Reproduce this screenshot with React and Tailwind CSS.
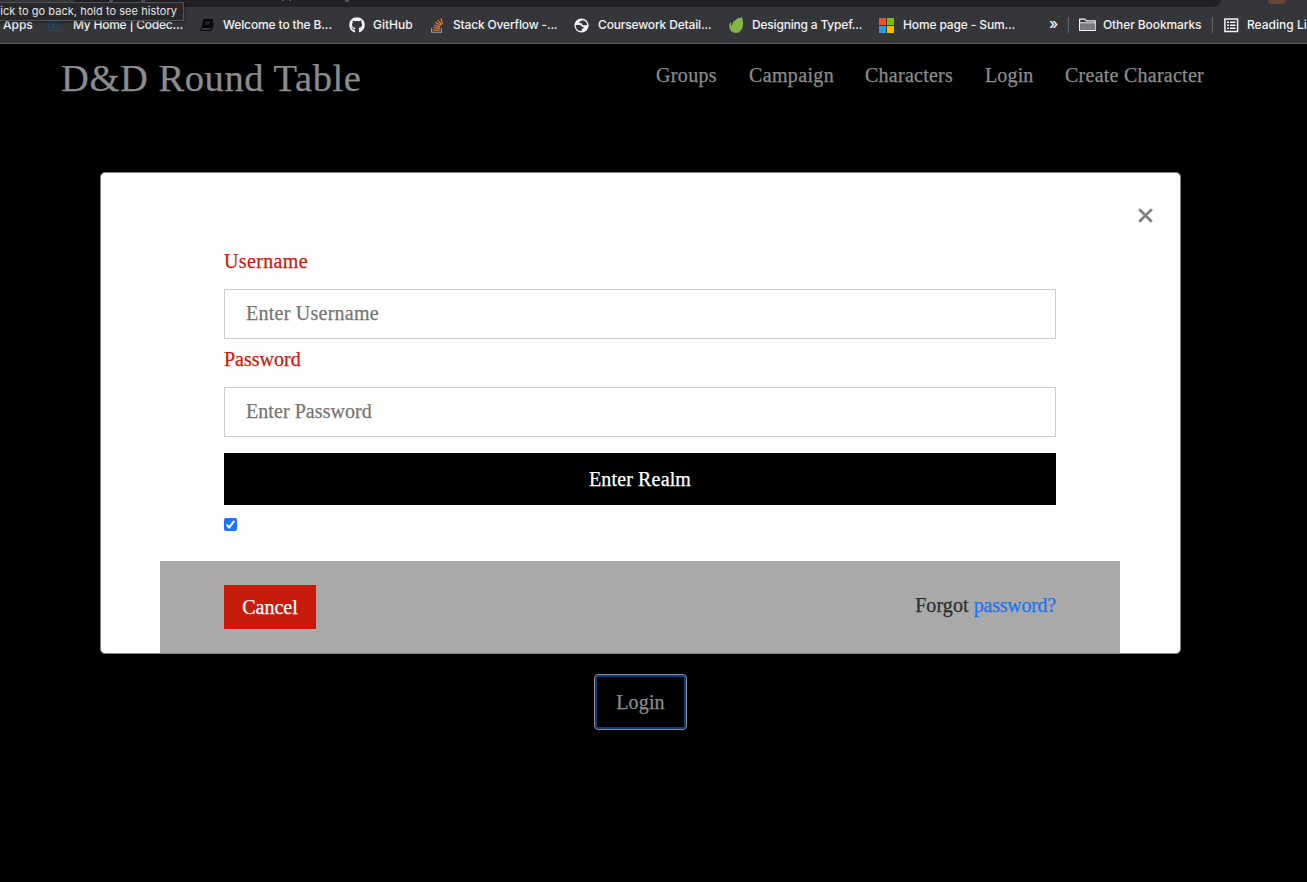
import React from "react";
import { FaGithub } from "react-icons/fa";

const serif = "font-['Liberation_Serif',serif] [-webkit-text-stroke:0.25px_currentColor]";

function BookIcon() {
  return (
    <svg width="14" height="14" viewBox="0 0 14 14">
      <path d="M4 1h8.500c.6 0 .8.3.6.9l-2.400 8.200H1.600L3.200 1.800C3.300 1.300 3.500 1 4 1z" fill="#050505" />
      <path d="M1.600 10c-1.200.8-.8 2.500.4 2.500h8.200c.6 0 1-.4 1.200-1l2-7" fill="none" stroke="#050505" strokeWidth="1.200" />
      <path d="M5.300 4h5M4.700 6h5" stroke="#444548" strokeWidth=".8" />
    </svg>
  );
}

function StackIcon() {
  return (
    <svg width="13" height="15" viewBox="0 0 13 15" fill="none">
      <path d="M.6 10v4.200h9.800V10" stroke="#9a9ca0" strokeWidth="1.100" />
      <path d="M2.300 12.200h6.500M2.400 9.700l6.400.7M3 7.100l6.100 1.700M4.300 4.300l5.400 3.200M6.700 2.100l4 4.700M10 .3l1.400 5.500" stroke="#e87a24" strokeWidth="1.300" />
    </svg>
  );
}

function GlobeIcon() {
  return (
    <svg width="15" height="15" viewBox="0 0 15 15">
      <circle cx="7.500" cy="7.500" r="7.100" fill="#f1f3f4" />
      <path d="M8.300 2.200 5.600 3.700c-.7.5-.3 1.500.5 1.500h1.200c.5 0 .8.4.8.8 0 .8.600 1.200 1.300 1.200h2.800l1-.4c-.2-2.400-1.900-4.200-4.900-4.600z" fill="#35363a" />
      <path d="M1.700 6.900h3.900c1.300 0 2.200.8 2.200 1.900h1.700c.3 1.500-.6 2.200-1.700 2.300v1.700c-1.300.6-3 .1-4.100-.8-1.300-1.200-2.100-3.100-2-5.100z" fill="#35363a" />
    </svg>
  );
}

function LeafIcon() {
  return (
    <svg width="15" height="16" viewBox="0 0 15 16">
      <path d="M11.900.4c1.500-.8 2.300 3.500 2.100 7.300-.2 4.500-2.800 8.100-7 8.100C3.100 15.800.3 13 .3 9.400c0-1.700.4-3.200 1.400-4.300.3-.3.600-.1.500.3-.3 1.300-.1 2.900.5 4.200C3.100 4.500 7.300 1.300 11.900.4z" fill="#82b541" />
    </svg>
  );
}

function WindowsIcon() {
  return (
    <svg width="15" height="15" viewBox="0 0 15 15">
      <path d="M0 0h7v7H0z" fill="#f25022" />
      <path d="M8 0h7v7H8z" fill="#7fba00" />
      <path d="M0 8h7v7H0z" fill="#239eea" />
      <path d="M8 8h7v7H8z" fill="#ffb900" />
    </svg>
  );
}

function FolderIcon() {
  return (
    <svg width="17" height="14" viewBox="0 0 17 14">
      <path d="M.6 12.400V1.100h5.200l1.500 1.800h8.900v9.500z" fill="#35363a" stroke="#f1f3f4" strokeWidth="1.200" />
      <path d="M1.200 5.200h14.500v6.600H1.200z" fill="#7b7c7f" />
      <path d="M.6 4.800h15.600" stroke="#f1f3f4" strokeWidth="1" />
    </svg>
  );
}

function ListIcon() {
  return (
    <svg width="15" height="15" viewBox="0 0 15 15" fill="none" stroke="#f1f3f4">
      <path d="M.9.9h12.700v12.700H.9z" strokeWidth="1.500" />
      <path d="M3 4.300h2M3 7.300h2M3 10.300h2M6 4.300h5.500M6 7.300h5.500M6 10.300h5.500" strokeWidth="1.400" />
    </svg>
  );
}

function CodecademyIcon() {
  return (
    <svg width="18" height="15" viewBox="0 0 18 15" fill="none" stroke="#204b70">
      <path d="M1 3.500h9v9H1z" />
      <path d="M7 6.200H4.500v3.600H7M13 12.800h3" />
    </svg>
  );
}

function Bookmark({ icon, iconBox, label, text }) {
  return (
    <div className="flex shrink-0 items-center">
      <span className={`flex shrink-0 items-center ${iconBox}`}>{icon}</span>
      <span className={`shrink-0 whitespace-nowrap ${text}`}>{label}</span>
    </div>
  );
}

function BrowserBar() {
  return (
    <div className="relative h-[44px] overflow-hidden border-b border-[#5b5c60] bg-[#35363a] font-['Inter',sans-serif] text-[12px] font-medium text-[#f1f3f4]">
      <div className="flex h-[7px] items-start">
        <div className="h-[7px] w-[75px]" />
        <div className="h-[7px] w-[1146px] rounded-br-[8px] bg-[#202124]">
          <svg className="block" width="300" height="3" viewBox="0 0 300 3" fill="none" stroke="#85878a">
            <path d="M34 .5c1 1 3 1 4 0M66 .5c1 1 3 1 4 0M208 0v1M215 0v1M270 .5c1 1 3 1 4 0" />
          </svg>
        </div>
        <div className="ml-[47px] h-[4px] w-[18px] rounded-b-full bg-[#69453c]" />
      </div>
      <div className="flex h-[36px] items-center pl-[3px]">
        <Bookmark iconBox="w-0" label="Apps" text="w-[45px]" />
        <Bookmark iconBox="w-[25px]" icon={<CodecademyIcon />} label="My Home | Codec..." text="w-[127px] tracking-[-0.23px]" />
        <Bookmark iconBox="w-[23px]" icon={<BookIcon />} label="Welcome to the B..." text="w-[126px] tracking-[-0.13px]" />
        <Bookmark iconBox="w-[24px]" icon={<FaGithub size={16} />} label="GitHub" text="w-[58px]" />
        <Bookmark iconBox="w-[22px]" icon={<StackIcon />} label="Stack Overflow -..." text="w-[121px] tracking-[-0.17px]" />
        <Bookmark iconBox="w-[24px]" icon={<GlobeIcon />} label="Coursework Detail..." text="w-[131px] tracking-[-0.16px]" />
        <Bookmark iconBox="w-[23px]" icon={<LeafIcon />} label="Designing a Typef..." text="w-[127px] tracking-[-0.19px]" />
        <Bookmark iconBox="w-[24px]" icon={<WindowsIcon />} label="Home page - Sum..." text="w-[146px] tracking-[-0.13px]" />
        <span className="w-[19px] shrink-0 pb-[2px] text-[15px]">»</span>
        <span className="mr-[10px] h-4 w-px shrink-0 bg-[#65666a]" />
        <Bookmark iconBox="w-[24px]" icon={<FolderIcon />} label="Other Bookmarks" text="w-[109px] tracking-[-0.1px]" />
        <span className="mr-[11px] h-4 w-px shrink-0 bg-[#65666a]" />
        <Bookmark iconBox="w-[23px]" icon={<ListIcon />} label="Reading List" text="" />
      </div>
      <div className="absolute left-[-1px] top-[2px] flex h-[19px] w-[185px] items-center justify-end whitespace-nowrap border border-[#515255] bg-[#27282a] pr-[6px] text-[11px] font-normal tracking-[0.04px] text-[#e4e4e5] shadow-[0_1px_3px_rgba(0,0,0,0.5)]">
        Click to go back, hold to see history
      </div>
    </div>
  );
}

function Header() {
  return (
    <header className={`flex h-[68px] shrink-0 text-[#8c8c8c] ${serif}`}>
      <h1 className="w-[655px] shrink-0 whitespace-nowrap pl-[61px] pt-[13px] text-[38.5px] leading-[42px] tracking-[0.58px]">D&amp;D Round Table</h1>
      <nav className="flex pl-px pt-[20px] text-[20px] leading-[22px] whitespace-nowrap">
        <a className="w-[93px] tracking-[0.35px]">Groups</a>
        <a className="w-[116px] tracking-[0.35px]">Campaign</a>
        <a className="w-[120px] tracking-[0.25px]">Characters</a>
        <a className="w-[80px] tracking-[0.15px]">Login</a>
        <a className="tracking-[0.25px]">Create Character</a>
      </nav>
    </header>
  );
}

function LoginModal() {
  return (
    <section className={`ml-[100px] mt-[60px] flex h-[482px] w-[1081px] shrink-0 flex-col rounded-[5px] border border-[#808080] bg-[#fefefe] text-[20px] leading-[22px] ${serif}`}>
      <div className="flex h-[76px] justify-end pr-[27px] pt-[35px]">
        <svg width="15" height="15" viewBox="0 0 15 15" stroke="#808080" strokeWidth="2.700">
          <path d="M1.200 1.200 13.800 13.800M13.800 1.200 1.200 13.800" />
        </svg>
      </div>
      <form className="flex h-[312px] flex-col pl-[123px] pr-[124px]">
        <label className="h-[40px] pt-px text-[#c91b0b] tracking-[0.35px]">Username</label>
        <input className="h-[50px] border border-[#ccc] bg-white pb-[1px] pl-[21px] tracking-[0.25px] outline-none placeholder:text-[#757575]" placeholder="Enter Username" />
        <label className="mt-[8px] h-[40px] pt-px text-[#c91b0b]">Password</label>
        <input className="h-[50px] border border-[#ccc] bg-white pb-[1px] pl-[21px] tracking-[0.06px] outline-none placeholder:text-[#757575]" type="password" placeholder="Enter Password" />
        <button type="button" className="mt-4 h-[52px] bg-black text-white tracking-[0.15px]">Enter Realm</button>
        <span className="mt-[13px] flex h-[13px] w-[13px] items-center justify-center rounded-[2px] bg-[#1a75ff]">
          <svg width="13" height="13" viewBox="0 0 13 13" fill="none" stroke="white" strokeWidth="2">
            <path d="M2.700 6.800 5.200 9.500 10.200 2.900" />
          </svg>
        </span>
      </form>
      <footer className="ml-[59px] flex h-[92px] w-[960px] justify-between bg-[#a9a9a9] px-16 pt-6">
        <button className="h-[44px] w-[92px] bg-[#c91b0b] text-white">Cancel</button>
        <p className="whitespace-nowrap pt-[9px] text-[#2b2d2f] tracking-[0.1px]">
          Forgot <a className="text-[#1677f4] tracking-[-0.25px]">password?</a>
        </p>
      </footer>
    </section>
  );
}

export default function App() {
  return (
    <main className="flex h-[882px] w-[1307px] flex-col overflow-hidden bg-black">
      <BrowserBar />
      <Header />
      <LoginModal />
      <button className={`ml-[594px] mt-[20px] flex h-[56px] w-[93px] shrink-0 items-center justify-center rounded-[4px] border border-[#8c8c8c] bg-black text-[20px] leading-[22px] text-[#8c8c8c] tracking-[0.15px] shadow-[inset_0_0_0_2px_#0b3c82] ${serif}`}>
        Login
      </button>
    </main>
  );
}
